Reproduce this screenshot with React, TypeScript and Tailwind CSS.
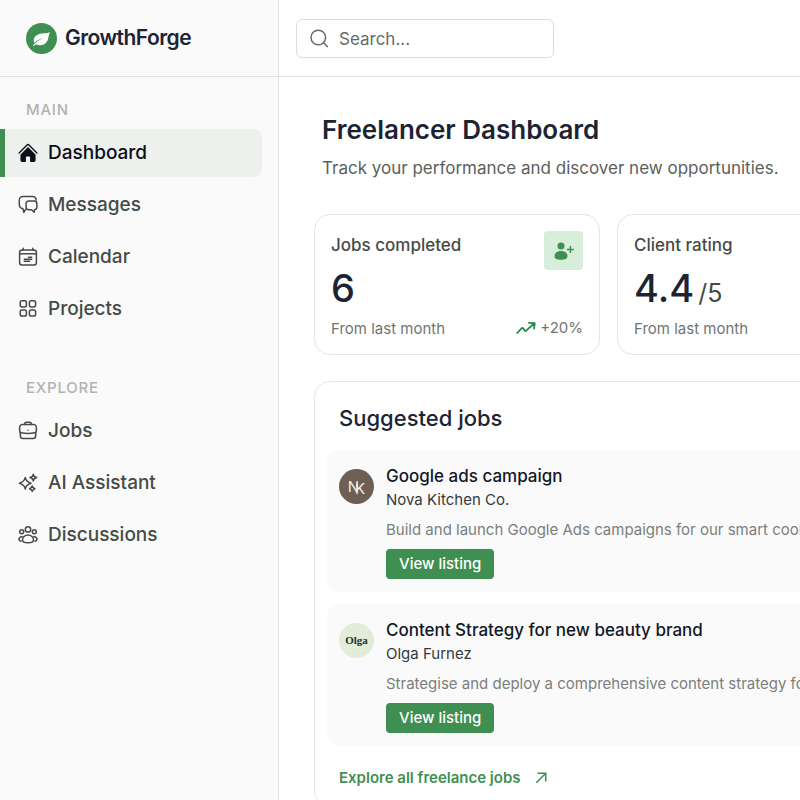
// Freelancer dashboard: sidebar navigation, search bar, headline stats and a
// short list of suggested jobs.

import type { ReactNode } from "react"
import { HiHome } from "react-icons/hi2"

interface NavItem {
  label: string
  icon: ReactNode
  active?: boolean
}

interface Job {
  title: string
  client: string
  description: string
  avatar: ReactNode
}

function Outline({ children }: { children: ReactNode }) {
  return (
    <svg
      viewBox="0 0 20 20"
      className="size-5"
      fill="none"
      stroke="currentColor"
      strokeWidth="1.5"
      strokeLinecap="round"
      strokeLinejoin="round"
      aria-hidden="true"
    >
      {children}
    </svg>
  )
}

const MAIN_NAV: NavItem[] = [
  { label: "Dashboard", icon: <HiHome className="-mx-px size-[22px]" />, active: true },
  {
    label: "Messages",
    icon: (
      <Outline>
        <path d="M7.8 14.2 5.8 17.4 4.9 13.6A3.6 3.6 0 0 1 1.3 10V5.2A3.7 3.7 0 0 1 5 1.5h9.6c1.9 0 3.3 1.4 3.6 3.5" />
        <path d="M10.8 6h5.4a2.7 2.7 0 0 1 2.7 2.7v3.3a2.7 2.7 0 0 1-2.3 2.7l-.5 2.6-2.5-2.6h-2.8A2.7 2.7 0 0 1 8.1 12V8.7A2.7 2.7 0 0 1 10.8 6Z" />
      </Outline>
    ),
  },
  {
    label: "Calendar",
    icon: (
      <Outline>
        <rect x="1.6" y="3" width="16.8" height="15" rx="2.6" />
        <path d="M1.6 6.8h16.8M5.2 1.2V3M14.8 1.2V3" />
        <path d="M10.5 10.2h3.2M6.2 12.2h7.5M6.2 14.2h5.5" />
      </Outline>
    ),
  },
  {
    label: "Projects",
    icon: (
      <Outline>
        <rect x="2.2" y="1.7" width="6.2" height="6.2" rx="1.8" />
        <rect x="11.4" y="1.7" width="6.2" height="6.2" rx="1.8" />
        <rect x="2.2" y="10.9" width="6.2" height="6.2" rx="1.8" />
        <rect x="11.4" y="10.9" width="6.2" height="6.2" rx="1.8" />
      </Outline>
    ),
  },
]

const EXPLORE_NAV: NavItem[] = [
  {
    label: "Jobs",
    icon: (
      <Outline>
        <path d="M6.6 3.6v-.4a2 2 0 0 1 2-2h2.8a2 2 0 0 1 2 2v.4" />
        <path d="M4.4 3.6h11.2a2.8 2.8 0 0 1 2.8 2.8v3.2c0 1.1-.7 1.9-1.7 2.1-4.4.9-9 .9-13.4 0-1-.2-1.7-1-1.7-2.1V6.4a2.8 2.8 0 0 1 2.8-2.8Z" />
        <path d="M2.3 11.6v3.2a2.8 2.8 0 0 0 2.8 2.8h9.8a2.8 2.8 0 0 0 2.8-2.8v-3.2M10 9.2h.01" />
      </Outline>
    ),
  },
  {
    label: "AI Assistant",
    icon: (
      <Outline>
        <path d="M7.3 4.4Q8.2 9 13 10.2 8.2 11.4 7.3 16 6.2 11.4 1.4 10.2 6.2 9 7.3 4.4Z" />
        <path d="M15.3 1.3q.5 2.7 3.3 3.3-2.8.6-3.3 3.3-.5-2.7-3.3-3.3 2.8-.6 3.3-3.3Z" />
        <path d="M14.2 13q.5 2.1 2.7 2.7-2.2.6-2.7 2.7-.5-2.1-2.7-2.7 2.2-.6 2.7-2.7Z" />
      </Outline>
    ),
  },
  {
    label: "Discussions",
    icon: (
      <Outline>
        <circle cx="10" cy="4.4" r="2.7" />
        <circle cx="3.7" cy="6.8" r="2" />
        <circle cx="16.3" cy="6.8" r="2" />
        <path d="M10 10c3.2 0 5.5 2.3 5.5 4.9 0 1.9-2.5 2.8-5.5 2.8s-5.5-.9-5.5-2.8C4.5 12.3 6.8 10 10 10Z" />
        <path d="M4.2 11.6c-1.9.3-3.2 1.6-3.2 3 0 .9.8 1.5 2 1.7M15.8 11.6c1.9.3 3.2 1.6 3.2 3 0 .9-.8 1.5-2 1.7" />
      </Outline>
    ),
  },
]

const JOBS: Job[] = [
  {
    title: "Google ads campaign",
    client: "Nova Kitchen Co.",
    description: "Build and launch Google Ads campaigns for our smart cookware range.",
    avatar: (
      <span className="flex size-[35px] shrink-0 items-center justify-center rounded-full bg-[#6f5f53] text-[15px] leading-5 text-[#f3eeea]">
        <span>N</span>
        <span className="-ml-1 pt-1">K</span>
      </span>
    ),
  },
  {
    title: "Content Strategy for new beauty brand",
    client: "Olga Furnez",
    description: "Strategise and deploy a comprehensive content strategy for our launch.",
    avatar: (
      <span className="flex size-[35px] shrink-0 items-center justify-center rounded-full bg-[#e2edd9] font-['Liberation_Serif',serif] text-[11px] font-bold text-[#22302a]">
        Olga
      </span>
    ),
  },
]

function NavSection({ title, items }: { title: string; items: NavItem[] }) {
  return (
    <section>
      <h2 className="mb-[9px] pl-[26px] text-[15px] leading-5 font-medium tracking-wider text-[#b0b3b0]">
        {title}
      </h2>
      <ul className="flex flex-col gap-1 pr-4">
        {items.map((item) => (
          <li key={item.label}>
            <a
              href="#"
              aria-current={item.active ? "page" : undefined}
              className={
                item.active
                  ? "flex h-12 items-center gap-2.5 rounded-r-lg border-l-[5px] border-[#3f8f52] bg-[#eef0ee] pl-[13px] text-[19px] font-medium text-[#0b0f19]"
                  : "flex h-12 items-center gap-2.5 border-l-[5px] border-transparent pl-[13px] text-[19px] font-medium text-[#454b47]"
              }
            >
              {item.icon}
              {item.label}
            </a>
          </li>
        ))}
      </ul>
    </section>
  )
}

function Sidebar() {
  return (
    <aside className="flex w-[279px] shrink-0 flex-col border-r border-[#dfe3e2] bg-[#fafafa]">
      <div className="flex h-[77px] shrink-0 items-center gap-2 border-b border-[#dfe3e2] pl-[26px]">
        <svg viewBox="0 0 30 30" className="size-[31px]" aria-hidden="true">
          <circle cx="15" cy="15" r="15" fill="#3f8f52" />
          <path
            d="M23.2 8.600c-2 1.500-4.800 1-8.200 1.500-4.700.7-7.600 3.400-7.500 7 0 .8.200 1.500.4 2.100 2.400-2.300 5.400-3.800 9.200-4.700-3.900 1.500-7.500 3.700-10.300 7 .1.500.7.700 1.200.3l1.500-1.300c3.700 2 8.300 1.100 10.700-2.400 1.900-2.800 1.300-6.400 3-9.500Z"
            fill="#fff"
          />
        </svg>
        <span className="text-[21px] font-semibold tracking-tight text-[#1c2434]">GrowthForge</span>
      </div>
      <nav className="flex flex-col gap-[45px] pt-[23px]">
        <NavSection title="MAIN" items={MAIN_NAV} />
        <NavSection title="EXPLORE" items={EXPLORE_NAV} />
      </nav>
    </aside>
  )
}

interface StatCardProps {
  label: string
  value: string
  suffix?: string
  aside?: ReactNode
}

function StatCard({ label, value, suffix, aside }: StatCardProps) {
  return (
    <div className="flex h-[141px] justify-between rounded-2xl border border-[#e4e5e5] px-4 pt-4 pb-3.5">
      <div className="flex flex-col">
        <h2 className="text-[17px] leading-7 font-medium text-[#454b47]">{label}</h2>
        <p className="flex h-[58px] items-baseline gap-1 text-[38px] leading-[58px] font-medium text-[#1c2434]">
          {value}
          {suffix && <span className="text-[25px] font-normal text-[#454b47]">{suffix}</span>}
        </p>
        <p className="text-[15px] leading-6 text-[#707572]">From last month</p>
      </div>
      {aside}
    </div>
  )
}

function JobsTrend() {
  return (
    <div className="flex flex-col items-end justify-between">
      <span className="flex size-[39px] items-center justify-center rounded-sm bg-[#d7eeda]">
        <svg viewBox="0 0 22 22" className="size-[22px]" fill="#3f8f52" aria-hidden="true">
          <circle cx="8" cy="6" r="3.5" />
          <path d="M8 11c4 0 6.500 2.200 6.500 5S12 19.800 8 19.800 1.500 18.800 1.500 16 4 11 8 11Z" />
          <path d="M17.400 6v7M13.900 9.500h7" stroke="#3f8f52" strokeWidth="1.5" />
        </svg>
      </span>
      <span className="flex items-center gap-1 text-[15px] leading-6 text-[#707572]">
        <svg
          viewBox="0 0 20 14"
          className="h-3.5 w-5"
          fill="none"
          stroke="#1f8a45"
          strokeWidth="1.8"
          strokeLinecap="round"
          strokeLinejoin="round"
          aria-hidden="true"
        >
          <path d="m1.200 12 4.600-4.800q.7-.7 1.200 0l1.700 2.400q.6.800 1.400 0L18.200 2.500M12.900 1.800l5.800.3-.6 5.400" />
        </svg>
        +20%
      </span>
    </div>
  )
}

function JobCard({ job }: { job: Job }) {
  return (
    <li className="flex h-[142px] gap-3 rounded-xl bg-[#fafafa] px-3 pt-[14px]">
      <div className="pt-[5px]">{job.avatar}</div>
      <div className="whitespace-nowrap">
        <h3 className="text-[17px] leading-6 font-medium text-[#111827]">{job.title}</h3>
        <p className="text-[15px] leading-6 text-[#343b40]">{job.client}</p>
        <p className="mt-1.5 text-[15px] leading-6 text-[#7b7f7d]">{job.description}</p>
        <button
          type="button"
          className="mt-[7px] h-[30px] rounded-sm bg-[#3f8f52] px-[13px] text-[15px] font-medium text-white"
        >
          View listing
        </button>
      </div>
    </li>
  )
}

export default function App() {
  return (
    <div className="flex h-screen overflow-hidden bg-white font-['Inter',sans-serif]">
      <Sidebar />
      <div className="min-w-0 flex-1">
        <header className="flex h-[77px] items-center border-b border-[#dfe3e2] pl-[17px]">
          <label className="flex h-[39px] w-[258px] items-center gap-2.5 rounded-md border border-[#d9dddb] px-3 text-[#666b68]">
            <svg
              viewBox="0 0 20 20"
              className="size-5 shrink-0"
              fill="none"
              stroke="currentColor"
              strokeWidth="1.5"
              strokeLinecap="round"
              aria-hidden="true"
            >
              <circle cx="9.3" cy="9.5" r="7.3" />
              <path d="m14.6 14.7 3.8 3.9" />
            </svg>
            <input
              type="search"
              aria-label="Search"
              placeholder="Search..."
              className="h-full min-w-0 flex-1 pt-0.5 text-[17px] outline-none placeholder:text-[#666b68]"
            />
          </label>
        </header>

        <main className="min-w-[606px] px-[35px] pt-8">
          <div className="pl-2">
            <h1 className="text-[26px] leading-[42px] font-semibold text-[#1c2434]">
              Freelancer Dashboard
            </h1>
            <p className="mt-[3px] text-[17px] leading-7 whitespace-nowrap text-[#5b605d]">
              Track your performance and discover new opportunities.
            </p>
          </div>

          <div className="mt-8 grid auto-cols-[286px] grid-flow-col gap-[17px]">
            <StatCard label="Jobs completed" value="6" aside={<JobsTrend />} />
            <StatCard label="Client rating" value="4.4" suffix="/5" />
          </div>

          <section className="mt-[26px] rounded-2xl border border-[#e4e5e5] px-3 pt-5 pb-4">
            <h2 className="pl-3 text-[22px] leading-8 font-medium text-[#1c2434]">
              Suggested jobs
            </h2>
            <ul className="mt-4 flex flex-col gap-3">
              {JOBS.map((job) => (
                <JobCard key={job.title} job={job} />
              ))}
            </ul>
            <a
              href="#"
              className="mt-5 flex items-center gap-3.5 pl-3 text-[15px] leading-6 font-semibold text-[#3f8f52]"
            >
              Explore all freelance jobs
              <svg
                viewBox="0 0 14 14"
                className="size-3"
                fill="none"
                stroke="currentColor"
                strokeWidth="1.8"
                aria-hidden="true"
              >
                <path d="M1.5 12.5 12 2M3 1.5h9.500V11" />
              </svg>
            </a>
          </section>
        </main>
      </div>
    </div>
  )
}
